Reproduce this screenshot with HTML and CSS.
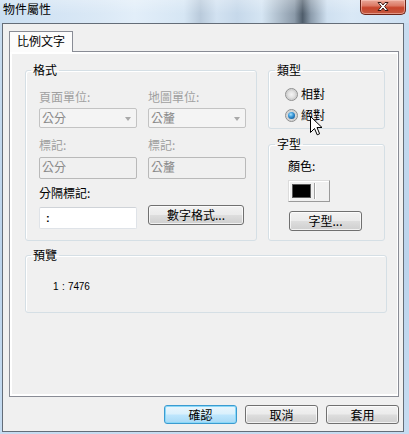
FILE: index.html
```html
<!DOCTYPE html>
<html lang="zh-Hant">
<head>
<meta charset="utf-8">
<title>物件屬性</title>
<link rel="stylesheet" href="styles.css">
</head>
<body>
<div class="window">
  <div class="titlebar">
    <span class="title">物件屬性</span>
    <div class="close">
      <svg width="14" height="11" viewBox="0 0 14 11"><path d="M2 1.5 L5 1.5 L7 4 L9 1.5 L12 1.5 L8.6 5.5 L12 9.5 L9 9.5 L7 7 L5 9.5 L2 9.5 L5.4 5.5 Z" fill="#fff" stroke="#3b1a14" stroke-width="1" stroke-linejoin="round"/></svg>
    </div>
  </div>
  <div class="client">
    <div class="tabs"><div class="tab">比例文字</div></div>
    <div class="panel">
      <div class="top-row">
        <fieldset class="group fmt">
          <legend>格式</legend>
          <div class="fmt-grid">
            <span class="lbl dis">頁面單位:</span>
            <span class="lbl dis">地圖單位:</span>
            <div class="combo r-combo"><span>公分</span><i class="arrow"></i></div>
            <div class="combo r-combo"><span>公釐</span><i class="arrow"></i></div>
            <span class="lbl dis r-lbl2">標記:</span>
            <span class="lbl dis r-lbl2">標記:</span>
            <div class="dbox r-box">公分</div>
            <div class="dbox r-box">公釐</div>
            <span class="lbl r-lbl3 span2">分隔標記:</span>
            <div class="ebox r-last">:</div>
            <button class="btn r-last btn-num">數字格式...</button>
          </div>
        </fieldset>
        <div class="right-col">
          <fieldset class="group type">
            <legend>類型</legend>
            <div class="radios">
              <div class="radio-row"><span class="radio"></span><span>相對</span></div>
              <div class="radio-row"><span class="radio on"></span><span>絕對</span></div>
            </div>
          </fieldset>
          <fieldset class="group font">
            <legend>字型</legend>
            <div class="font-body">
              <span class="lbl">顏色:</span>
              <div class="color-btn"><span class="swatch"></span><span class="sep"></span></div>
              <button class="btn btn-font">字型...</button>
            </div>
          </fieldset>
        </div>
      </div>
      <fieldset class="group preview">
        <legend>預覽</legend>
        <div class="preview-text">1 : 7476</div>
      </fieldset>
    </div>
    <div class="buttons">
      <button class="btn btn-def">確認</button>
      <button class="btn">取消</button>
      <button class="btn">套用</button>
    </div>
  </div>
  <svg class="cursor" width="13" height="20" viewBox="0 0 13 20"><path d="M0.5 0.5 L0.5 16.5 L4.5 12.5 L7.2 18.8 L9.6 17.8 L7 11.5 L12 11.5 Z" fill="#fff" stroke="#000" stroke-width="1" stroke-linejoin="miter"/></svg>
</div>
</body>
</html>
```

FILE: styles.css
```css
* { box-sizing: border-box; }
html, body { margin: 0; padding: 0; }
body {
  width: 409px;
  height: 434px;
  overflow: hidden;
  font-family: "Noto Sans CJK TC", "Noto Sans", sans-serif;
  font-size: 12px;
  line-height: 14px;
  color: #000;
}
.window {
  position: relative;
  display: flex;
  flex-direction: column;
  height: 434px;
  background: linear-gradient(to bottom, #c9ddf0 0%, #bcd4ec 60%, #c6dcf1 100%);
}
.titlebar {
  height: 23px;
  display: flex;
  justify-content: space-between;
  align-items: flex-start;
  background:
    linear-gradient(to bottom, rgba(255,255,255,0.25), rgba(255,255,255,0) 60%),
    linear-gradient(to right,
      #cadff2 0%, #d3e4f4 12%, #dbe9f6 25%, #e2eef9 33%, #d6e6f4 45%,
      #b9cadb 49%, #d2e2f1 53%, #c6d8ea 58%, #d5e5f3 64%,
      #8b9aa9 72%, #4f5d6b 74%, #8c9cac 76%, #cfe0f0 80%, #d9e8f6 86%, #cde0f2 100%);
}
.title {
  padding: 2px 0 0 3px;
  font-size: 12px;
  line-height: 14px;
  color: #000;
}
.close {
  width: 46px;
  height: 15px;
  margin-right: 3px;
  border: 1px solid #6b2418;
  border-top: none;
  border-radius: 0 0 5px 5px;
  background: linear-gradient(to bottom, #e9a899 0%, #dc7a66 40%, #c8452c 55%, #c55a42 100%);
  box-shadow: inset 0 0 0 1px rgba(255,210,200,0.5);
  display: flex;
  align-items: center;
  justify-content: center;
}
.close svg { display: block; margin-top: -1px; }
.client {
  flex: 1;
  margin: 0 5px 2px 2px;
  border: 1px solid #646d78;
  background: #f0f0f0;
  display: flex;
  flex-direction: column;
}
.tabs {
  padding: 7px 0 0 6px;
  display: flex;
}
.tab {
  position: relative;
  z-index: 1;
  width: 64px;
  height: 21px;
  margin-bottom: -1px;
  border: 1px solid #898c95;
  border-bottom: none;
  background: #fcfcfc;
  text-align: center;
  padding-top: 2px;
  font-size: 12px;
  line-height: 14px;
}
.panel {
  margin-left: 6px;
  width: 390px;
  height: 346px;
  border: 1px solid #898c95;
  background: #f0f0f0;
  box-shadow: inset 2px 2px 0 #fff, inset -1px -2px 0 #fff;
  padding: 11px 0 0 15px;
}
.top-row {
  display: flex;
  align-items: flex-start;
}
.group {
  margin: 0;
  padding: 0;
  min-width: 0;
  border: 1px solid #d5dfe5;
  border-radius: 3px;
  box-shadow: inset 1px 1px 0 #fff;
}
.group legend {
  margin-left: 5px;
  padding: 0 2px;
  font-size: 12px;
  line-height: 14px;
}
.fmt {
  width: 232px;
  padding: 13px 0 11px 0;
}
.fmt-grid {
  display: grid;
  grid-template-columns: 98px 98px;
  column-gap: 11px;
  align-items: center;
  padding-left: 13px;
}
.lbl { display: block; height: 14px; line-height: 14px; white-space: nowrap; }
.dis { color: #a0a0a0; }
.span2 { grid-column: 1 / span 2; }
.r-combo { margin-top: 4px; }
.r-lbl2 { margin-top: 10px; }
.r-box { margin-top: 5px; }
.r-lbl3 { margin-top: 7px; }
.r-last { margin-top: 7px; }
.btn-num { margin-top: 7px; margin-left: 1px; width: 96px; }
.combo {
  height: 20px;
  border: 1px solid #c3c3c3;
  border-radius: 2px;
  background: #f4f4f4;
  color: #8a8a8a;
  display: flex;
  align-items: center;
  justify-content: space-between;
  padding: 0 5px 0 2px;
}
.arrow {
  width: 0;
  height: 0;
  border-left: 3px solid transparent;
  border-right: 3px solid transparent;
  border-top: 4px solid #a9a9a9;
  margin-top: 1px;
}
.dbox {
  height: 22px;
  border: 1px solid #b9b9b9;
  border-radius: 2px;
  background: #f0f0f0;
  color: #8a8a8a;
  padding: 2px 0 0 2px;
}
.ebox {
  height: 22px;
  border: 1px solid #dfe3e8;
  border-top-color: #cfd3d8;
  border-radius: 2px;
  background: #fff;
  padding: 3px 0 0 6px;
  font-family: "Liberation Sans", sans-serif;
  font-weight: bold;
  font-size: 11px;
}
.btn {
  font-family: "Noto Sans CJK TC", "Noto Sans", sans-serif;
  font-size: 12px;
  line-height: 14px;
  color: #000;
  height: 20px;
  padding: 0;
  margin: 0;
  border: 1px solid #707070;
  border-radius: 3px;
  background: linear-gradient(to bottom, #f2f2f2 0%, #ebebeb 48%, #dddddd 52%, #cfcfcf 100%);
  box-shadow: inset 0 0 0 1px rgba(255,255,255,0.7);
}
.right-col {
  margin-left: 11px;
  width: 117px;
  display: flex;
  flex-direction: column;
}
.right-col .group legend { margin-left: 6px; }
.type {
  padding: 10px 0 6px 0;
}
.radios { display: flex; flex-direction: column; gap: 7px; padding-left: 16px; }
.radio-row {
  display: flex;
  align-items: center;
  gap: 3px;
  height: 14px;
}
.radio {
  width: 13px;
  height: 13px;
  border-radius: 50%;
  border: 1px solid #8e8f8f;
  background: radial-gradient(circle at 50% 50%, #f4f4f4 0%, #e0e0e0 45%, #cfcfcf 60%, #f7f7f7 100%);
  display: flex;
  align-items: center;
  justify-content: center;
}
.radio.on::after {
  content: "";
  width: 7px;
  height: 7px;
  border-radius: 50%;
  background: radial-gradient(circle at 40% 35%, #a9e3ff 0%, #3a98d8 40%, #135c9b 80%, #0d3f6f 100%);
}
.font {
  margin-top: 8px;
  padding: 8px 0 9px 0;
}
.font-body { display: flex; flex-direction: column; align-items: flex-start; padding-left: 19px; }
.color-btn {
  margin-top: 7px;
  width: 42px;
  height: 22px;
  border: 1px solid;
  border-color: #dcdcdc #9a9a9a #9a9a9a #dcdcdc;
  background: #f0f0f0;
  box-shadow: inset 1px 1px 0 #fff;
  display: flex;
  align-items: center;
  padding-left: 3px;
}
.swatch {
  width: 19px;
  height: 14px;
  background: #000;
  border: 1px solid #5a5a5a;
}
.sep {
  width: 2px;
  height: 16px;
  margin-left: 3px;
  border-left: 1px solid #a0a0a0;
  border-right: 1px solid #fff;
}
.btn-font {
  margin-top: 9px;
  margin-left: 1px;
  width: 73px;
}
.preview {
  margin-top: 7px;
  width: 362px;
  padding: 18px 0 19px 0;
}
.preview-text {
  padding-left: 27px;
  font-family: "Liberation Sans", sans-serif;
  font-size: 10px;
  line-height: 13px;
  letter-spacing: -0.2px;
  word-spacing: 1px;
}
.buttons {
  margin-top: 8px;
  display: flex;
  justify-content: flex-end;
  gap: 8px;
  padding-right: 4px;
}
.buttons .btn { width: 73px; height: 19px; }
.btn-def {
  border-color: #3b9bd0;
  background: linear-gradient(to bottom, #eaf6fd 0%, #d9f0fc 48%, #bee6fd 52%, #a7d9f5 100%);
  box-shadow: inset 0 0 0 1px #8ad8f8;
}
.cursor {
  position: absolute;
  left: 310px;
  top: 116px;
}
```
